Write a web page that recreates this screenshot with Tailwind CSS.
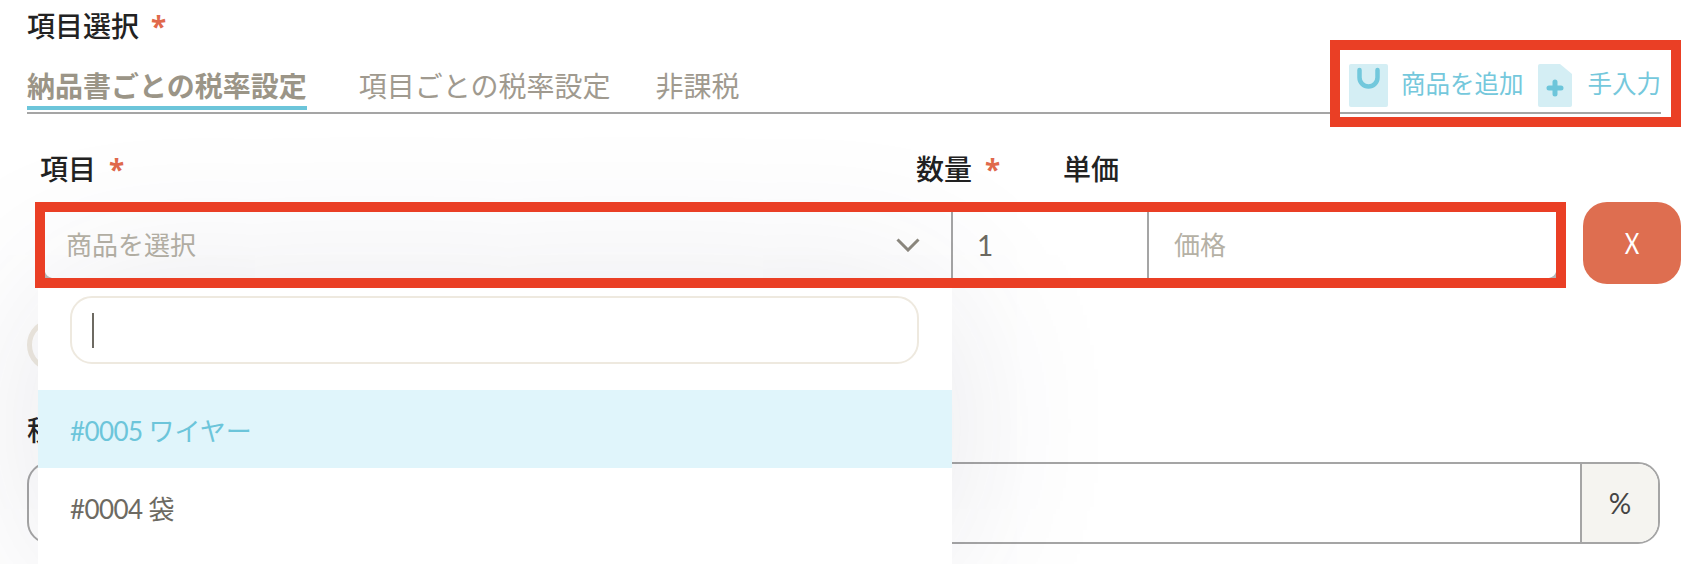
<!DOCTYPE html>
<html lang="ja">
<head>
<meta charset="utf-8">
<title>項目選択</title>
<script src="https://cdn.jsdelivr.net/npm/@tailwindcss/browser@4"></script>
</head>
<body class="bg-white">
<div class="relative w-[1704px] h-[564px] overflow-hidden bg-white text-[#222] font-['Lato','Noto_Sans_CJK_JP',sans-serif]">

  <div class="h-[52px] pl-[27px] flex items-center text-[28px] font-medium text-[#222]">
    <span>項目選択</span><span class="ml-[12px] text-[#e0694c] font-bold font-['Noto_Sans',sans-serif]">*</span>
  </div>

  <div class="relative ml-[27px] w-[1634px] h-[62px] flex items-start gap-[52px] border-b-2 border-[#a5a5a5] text-[28px] text-[#a09a8f]">
    <div class="h-[58px] pt-[8px] leading-[52px] border-b-4 border-[#6cc5da] font-bold text-[#9b9587]">納品書ごとの税率設定</div>
    <div class="h-[58px] pt-[8px] leading-[52px]">項目ごとの税率設定</div>
    <div class="h-[58px] pt-[8px] leading-[52px] ml-[-7px]">非課税</div>
    <div class="absolute left-[1303px] top-[-12px] w-[351px] h-[87px] border-10 border-[#ea3f25] flex items-start pt-[14px] pl-[9px] text-[24.5px] text-[#75c8dc]">
      <svg width="39" height="43" viewBox="0 0 39 43" class="shrink-0"><rect width="39" height="43" rx="2" fill="#d4eef4"/><path d="M10.500 6v7.500a9 9 0 0 0 18 0V6" fill="none" stroke="#72c8dc" stroke-width="4.500" stroke-linecap="round"/></svg>
      <span class="ml-[13px] mt-[4px] leading-[32px]">商品を追加</span>
      <svg width="34" height="43" viewBox="0 0 34 43" class="shrink-0 ml-[14px]"><path d="M2 0h20l12 10v31a2 2 0 0 1-2 2H2a2 2 0 0 1-2-2V2a2 2 0 0 1 2-2z" fill="#d4eef4"/><path d="M17 18v12M11 24h12" fill="none" stroke="#6cc5da" stroke-width="5" stroke-linecap="round"/></svg>
      <span class="ml-[16px] mt-[4px] leading-[32px]">手入力</span>
    </div>
  </div>

  <div class="h-[88px] pl-[40px] flex items-start pt-[35px] text-[28px] font-medium text-[#222] leading-[40px]">
    <div class="w-[876px]">項目<span class="ml-[13px] text-[#e0694c] font-bold font-['Noto_Sans',sans-serif]">*</span></div>
    <div class="w-[147px]">数量<span class="ml-[13px] text-[#e0694c] font-bold font-['Noto_Sans',sans-serif]">*</span></div>
    <div>単価</div>
  </div>

  <div class="flex items-start ml-[35px]">
    <div class="relative w-[1531px] h-[86px] p-[10px] bg-white">
      <div class="flex h-full text-[26px]">
        <div class="w-[906px] flex items-center justify-between pl-[21px] pr-[31px] text-[#b5b1a5]">
          <span>商品を選択</span>
          <svg width="24" height="14" viewBox="0 0 24 14"><path d="M1.500 1.500 12 12 22.500 1.500" fill="none" stroke="#8c887e" stroke-width="3"/></svg>
        </div>
        <div class="w-[196px] flex items-center pl-[24px] border-l-2 border-[#a5a5a5] text-[#6d6a62] text-[28px]">1</div>
        <div class="flex-1 flex items-center pl-[25px] border-l-2 border-[#a5a5a5] text-[#b5b1a5]">価格</div>
      </div>
      <div class="absolute inset-0 z-20 border-10 border-[#ea3f25]"></div>
      <svg width="7" height="6" viewBox="0 0 7 6" class="absolute left-[10px] bottom-[10px] z-30"><path d="M0 0c1 3 3 5 7 6H0z" fill="#b5b5b5"/></svg>
      <svg width="7" height="6" viewBox="0 0 7 6" class="absolute right-[10px] bottom-[10px] z-30"><path d="M7 0C6 3 4 5 0 6h7z" fill="#b5b5b5"/></svg>
    </div>
    <div class="ml-[17px] w-[98px] h-[82px] rounded-[24px] bg-[#de6e50] text-white text-[28px] flex items-center justify-center"><span class="scale-x-80">X</span></div>
  </div>

  <div class="ml-[27px] mt-[30px] w-[300px] h-[54px] rounded-full border-[5px] border-[#eee9df]"></div>

  <div class="ml-[27px] mt-[42px] h-[32px] leading-[32px] text-[28px] font-medium">税率</div>

  <div class="ml-[27px] mt-[16px] w-[1633px] h-[82px] flex rounded-[22px] border-2 border-[#a5a5a5] overflow-hidden">
    <div class="flex-1"></div>
    <div class="w-[78px] flex items-center justify-center border-l-2 border-[#a5a5a5] bg-[#f5f4f0] text-[28px] text-[#444]">%</div>
  </div>

  <div class="absolute left-[38px] top-[288px] w-[914px] h-[276px] z-10 bg-white shadow-[0_0_170px_rgba(60,60,90,0.12)] pt-[8px]">
    <div class="ml-[32px] w-[849px] h-[68px] rounded-[22px] border-2 border-[#eee9df] flex items-center pl-[20px]">
      <div class="w-[2px] h-[35px] bg-[#6d6a62]"></div>
    </div>
    <div class="mt-[26px] h-[78px] pl-[32px] pt-[5px] bg-[#e0f5fb] flex items-center text-[26px] text-[#6cc5da] whitespace-pre"><span class="tracking-[-0.6px]">#0005 </span><span>ワイヤー</span></div>
    <div class="h-[78px] pl-[32px] pt-[5px] flex items-center text-[26px] text-[#6d6a62] whitespace-pre"><span class="tracking-[-0.6px]">#0004 </span><span>袋</span></div>
  </div>
</div>
</body>
</html>
